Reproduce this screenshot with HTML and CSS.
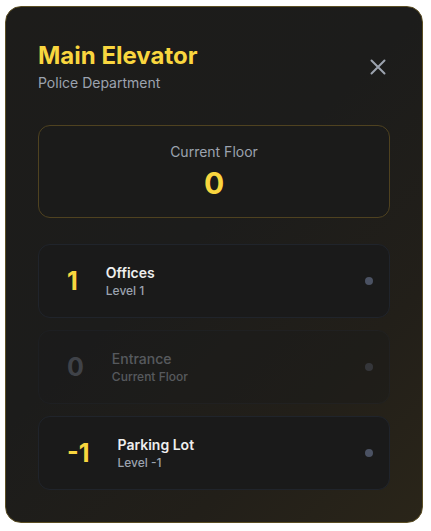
FILE: index.html
```html
<!DOCTYPE html>
<html lang="en">
<head>
<meta charset="utf-8">
<title>Main Elevator</title>
<link rel="stylesheet" href="styles.css">
</head>
<body>
<div class="panel">
  <div class="header">
    <div class="titles">
      <h1 class="title">Main Elevator</h1>
      <p class="subtitle">Police Department</p>
    </div>
    <button class="close" aria-label="Close">
      <svg width="16" height="16" viewBox="0 0 16 16" fill="none" stroke="currentColor" stroke-width="2" stroke-linecap="round">
        <path d="M1.5 1.5L14.5 14.5M14.5 1.5L1.5 14.5"/>
      </svg>
    </button>
  </div>

  <div class="current">
    <div class="current-label">Current Floor</div>
    <div class="current-value">0</div>
  </div>

  <div class="floors">
    <div class="floor">
      <div class="floor-num">1</div>
      <div class="floor-info">
        <div class="floor-name">Offices</div>
        <div class="floor-level">Level 1</div>
      </div>
      <span class="dot"></span>
    </div>
    <div class="floor disabled">
      <div class="floor-num">0</div>
      <div class="floor-info">
        <div class="floor-name">Entrance</div>
        <div class="floor-level">Current Floor</div>
      </div>
      <span class="dot"></span>
    </div>
    <div class="floor">
      <div class="floor-num">-1</div>
      <div class="floor-info">
        <div class="floor-name">Parking Lot</div>
        <div class="floor-level">Level -1</div>
      </div>
      <span class="dot"></span>
    </div>
  </div>
</div>
</body>
</html>
```

FILE: styles.css
```css
* { box-sizing: border-box; }
html, body { margin: 0; padding: 0; }
body {
  width: 431px;
  height: 531px;
  background: #ffffff;
  font-family: Inter, "Noto Sans", sans-serif;
  display: flex;
  align-items: flex-start;
  justify-content: flex-start;
  padding: 6px 0 0 5px;
}
.panel {
  width: 418px;
  height: 517px;
  border: 1px solid #5c4f24;
  border-radius: 16px;
  background: linear-gradient(135deg, #1d1c1a 0%, #1c1c1b 45%, #221f19 75%, #2a2519 100%);
  padding: 32px;
}
.header {
  display: flex;
  align-items: center;
  justify-content: space-between;
  margin-bottom: 32px;
  padding-top: 1px;
}
.title {
  margin: 0;
  font-size: 24px;
  line-height: 32px;
  font-weight: 700;
  color: #f9d63f;
}
.subtitle {
  margin: 1px 0 0;
  font-size: 14px;
  line-height: 20px;
  color: #9ca3af;
}
.close {
  background: none;
  border: none;
  padding: 4px;
  margin: 0;
  color: #9ca3af;
  display: flex;
  cursor: pointer;
}
.current {
  border: 1px solid #4f4220;
  border-radius: 12px;
  background: #1b1b1a;
  padding: 16px;
  display: flex;
  flex-direction: column;
  align-items: center;
  gap: 3px;
  margin-bottom: 26px;
}
.current-label {
  font-size: 14px;
  line-height: 20px;
  color: #9ca3af;
}
.current-value {
  font-size: 30px;
  line-height: 36px;
  font-weight: 700;
  color: #f9d63f;
}
.floors {
  display: flex;
  flex-direction: column;
  gap: 12px;
}
.floor {
  display: flex;
  align-items: center;
  height: 74px;
  padding: 0 16px 0 28px;
  border: 1px solid #20242b;
  border-radius: 12px;
  background: #1a1a1a;
  gap: 28px;
}
.floor-num {
  font-size: 25px;
  line-height: 32px;
  font-weight: 700;
  color: #f9d63f;
}
.floor-info {
  flex: 1;
  display: flex;
  flex-direction: column;
}
.floor-name {
  font-size: 14px;
  line-height: 20px;
  font-weight: 600;
  color: #eeeeee;
}
.floor-level {
  font-size: 12px;
  line-height: 16px;
  font-weight: 500;
  color: #9ca3af;
}
.dot {
  width: 8px;
  height: 8px;
  border-radius: 50%;
  background: #4b5263;
}
.floor.disabled {
  opacity: 0.45;
  background: #1b1b1b;
}
.floor.disabled .floor-num { color: #6b7280; }
.floor.disabled .floor-name { color: #9ca3af; font-weight: 500; }
.floor.disabled .floor-level { color: #9ca3af; }
```
